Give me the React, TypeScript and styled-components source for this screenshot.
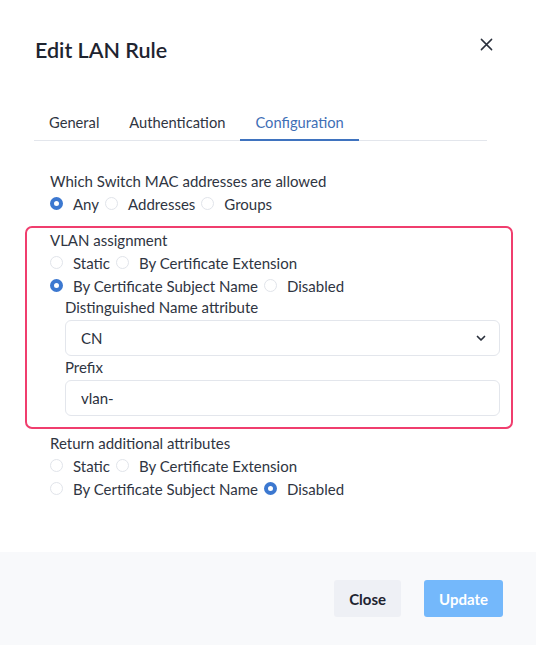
import { useState } from "react";
import styled, { createGlobalStyle } from "styled-components";

const GlobalStyle = createGlobalStyle`
  html, body {
    margin: 0;
    padding: 0;
    background: #ffffff;
  }
  body {
    font-family: Lato, "Open Sans", sans-serif;
    color: #2f3542;
  }
  * {
    box-sizing: border-box;
  }
`;

const Modal = styled.div`
  width: 536px;
  height: 645px;
  display: flex;
  flex-direction: column;
  background: #ffffff;
`;

const Header = styled.div`
  display: flex;
  justify-content: space-between;
  align-items: flex-start;
  padding: 36px 42px 0 35px;
`;

const Title = styled.h2`
  margin: 0;
  font-size: 21.5px;
  line-height: 28px;
  font-weight: 600;
  color: #1e2430;
`;

const CloseX = styled.button`
  border: none;
  background: none;
  padding: 0;
  margin-top: 2px;
  width: 14px;
  height: 14px;
  cursor: pointer;
  color: #2a303c;
  display: flex;
`;

const Body = styled.div`
  flex: 1;
  padding: 40px 49px 0 34px;
`;

const TabBar = styled.div`
  display: flex;
  border-bottom: 1px solid #e3e6ec;
`;

const Tab = styled.button<{ $active?: boolean }>`
  border: none;
  background: none;
  font-family: inherit;
  font-size: 14.7px;
  line-height: 20px;
  padding: 8px 15px 7px;
  margin-bottom: -1px;
  color: ${(p) => (p.$active ? "#3f6fb6" : "#2f3542")};
  border-bottom: 2px solid ${(p) => (p.$active ? "#3f73bf" : "transparent")};
  cursor: pointer;
`;

const Panel = styled.div`
  padding-top: 30px;
`;

const Field = styled.div`
  padding-left: 16px;
`;

const Highlight = styled.div`
  margin: 11px -26px 0 -9px;
  border: 2px solid #f03e6e;
  border-radius: 7px;
  padding: 2px 11px 10px 23px;
`;

const Label = styled.div<{ $indent?: boolean }>`
  font-size: 15px;
  line-height: 21px;
  color: #2f3542;
  margin-left: ${(p) => (p.$indent ? "15px" : "0")};
`;

const RadioRow = styled.div`
  display: flex;
  align-items: center;
  flex-wrap: wrap;
  height: 23px;
`;

const RadioOption = styled.label`
  display: flex;
  align-items: center;
  gap: 10px;
  margin-right: 6px;
  font-size: 15px;
  color: #2f3542;
  cursor: pointer;
`;

const RadioDot = styled.span<{ $checked?: boolean }>`
  width: 13px;
  height: 13px;
  border-radius: 50%;
  background: #ffffff;
  border: ${(p) => (p.$checked ? "4px solid #3c78d0" : "1px solid #e1e4ea")};
  flex-shrink: 0;
`;

const InputGroup = styled.div`
  margin: 2px 0 1px 15px;
`;

const SelectBox = styled.div`
  height: 36px;
  border: 1px solid #e3e6ec;
  border-radius: 6px;
  display: flex;
  align-items: center;
  padding: 0 16px 0 15px;
  font-size: 15px;
  color: #2a303c;
`;

const Chevron = styled.svg`
  margin-left: auto;
  width: 12px;
  height: 12px;
  margin-right: -4px;
  color: #2a303c;
`;

const TextInput = styled.input`
  display: block;
  width: 100%;
  height: 36px;
  border: 1px solid #e3e6ec;
  border-radius: 6px;
  padding: 0 15px;
  font-family: inherit;
  font-size: 15px;
  color: #2a303c;
  outline: none;
`;

const Section = styled.div`
  margin-top: 4px;
`;

const Footer = styled.div`
  height: 93px;
  background: #f8f9fb;
  display: flex;
  justify-content: flex-end;
  align-items: flex-start;
  gap: 23px;
  padding: 28px 33px 0 0;
`;

const Button = styled.button<{ $primary?: boolean }>`
  height: 37px;
  border: none;
  border-radius: 3px;
  font-family: inherit;
  font-size: 15px;
  font-weight: 700;
  padding: 0 15px;
  background: ${(p) => (p.$primary ? "#74b8fb" : "#eef0f5")};
  color: ${(p) => (p.$primary ? "#ffffff" : "#1e2430")};
  cursor: pointer;
`;

type Opt = { label: string; checked?: boolean };

function Radios({ rows }: { rows: Opt[][] }) {
  return (
    <>
      {rows.map((row, i) => (
        <RadioRow key={i}>
          {row.map((o) => (
            <RadioOption key={o.label}>
              <RadioDot $checked={o.checked} />
              {o.label}
            </RadioOption>
          ))}
        </RadioRow>
      ))}
    </>
  );
}

export default function App() {
  const [tab, setTab] = useState("Configuration");
  const tabs = ["General", "Authentication", "Configuration"];

  return (
    <>
      <GlobalStyle />
      <Modal>
        <Header>
          <Title>Edit LAN Rule</Title>
          <CloseX aria-label="Close">
            <svg viewBox="0 0 14 14" width="13" height="13">
              <path
                d="M1.5 1.5 L12.5 12.5 M12.5 1.5 L1.5 12.5"
                stroke="currentColor"
                strokeWidth="1.6"
                strokeLinecap="round"
              />
            </svg>
          </CloseX>
        </Header>
        <Body>
          <TabBar>
            {tabs.map((t) => (
              <Tab key={t} $active={t === tab} onClick={() => setTab(t)}>
                {t}
              </Tab>
            ))}
          </TabBar>
          <Panel>
            <Field>
              <Label>Which Switch MAC addresses are allowed</Label>
              <Radios
                rows={[
                  [
                    { label: "Any", checked: true },
                    { label: "Addresses" },
                    { label: "Groups" },
                  ],
                ]}
              />
            </Field>
            <Highlight>
              <Label>VLAN assignment</Label>
              <Radios
                rows={[
                  [{ label: "Static" }, { label: "By Certificate Extension" }],
                  [
                    { label: "By Certificate Subject Name", checked: true },
                    { label: "Disabled" },
                  ],
                ]}
              />
              <Label $indent>Distinguished Name attribute</Label>
              <InputGroup>
                <SelectBox>
                  CN
                  <Chevron viewBox="0 0 12 12">
                    <path
                      d="M2.5 4.5 L6 8 L9.5 4.5"
                      fill="none"
                      stroke="currentColor"
                      strokeWidth="1.7"
                      strokeLinecap="round"
                      strokeLinejoin="round"
                    />
                  </Chevron>
                </SelectBox>
              </InputGroup>
              <Label $indent>Prefix</Label>
              <InputGroup>
                <TextInput defaultValue="vlan-" />
              </InputGroup>
            </Highlight>
            <Section>
              <Field>
                <Label>Return additional attributes</Label>
                <Radios
                  rows={[
                    [{ label: "Static" }, { label: "By Certificate Extension" }],
                    [
                      { label: "By Certificate Subject Name" },
                      { label: "Disabled", checked: true },
                    ],
                  ]}
                />
              </Field>
            </Section>
          </Panel>
        </Body>
        <Footer>
          <Button>Close</Button>
          <Button $primary>Update</Button>
        </Footer>
      </Modal>
    </>
  );
}
